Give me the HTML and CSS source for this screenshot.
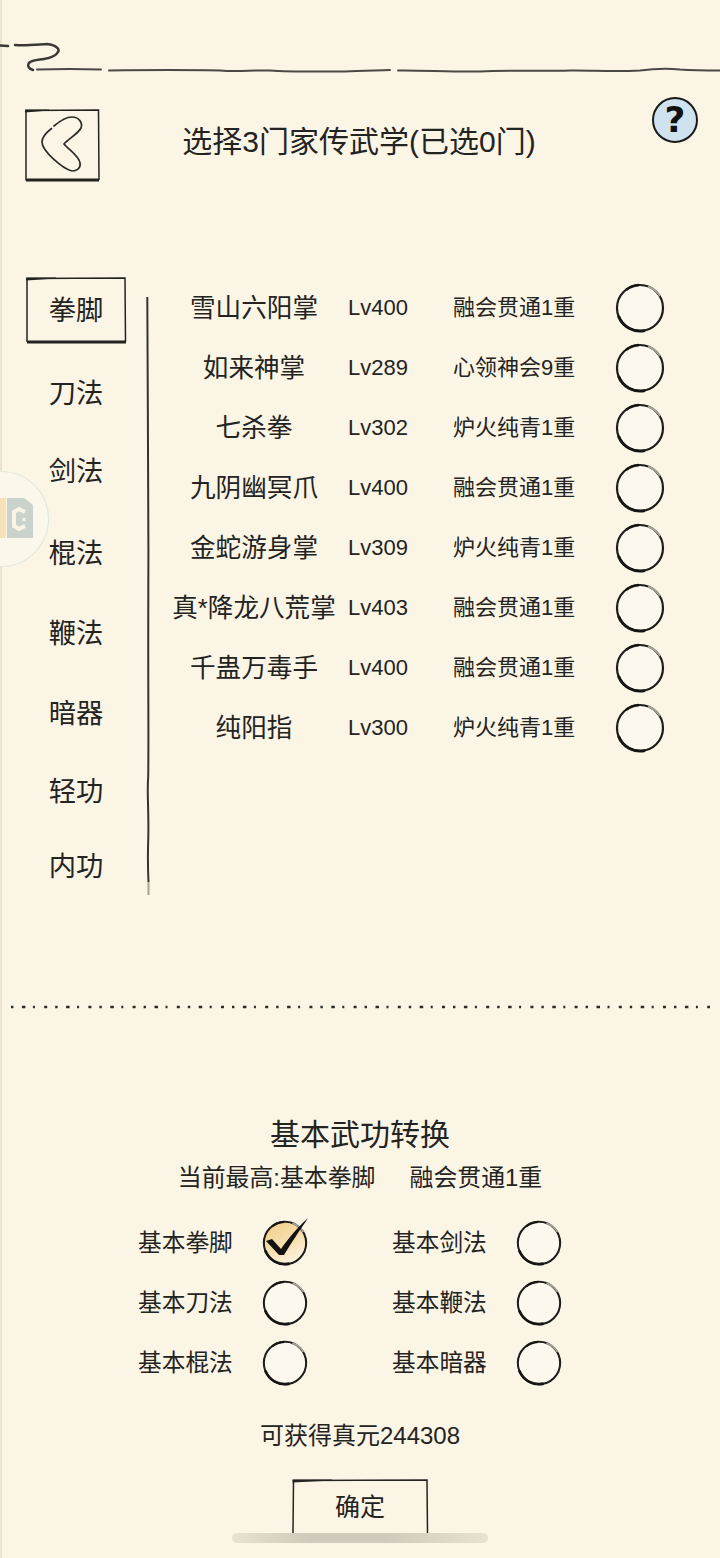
FILE: index.html
```html
<!DOCTYPE html>
<html lang="zh-CN">
<head>
<meta charset="utf-8">
<title>选择家传武学</title>
<link rel="stylesheet" href="styles.css">
</head>
<body>
<svg class="defs" aria-hidden="true">
  <defs>
    <symbol id="ring-ink" viewBox="0 0 50 50">
      <circle cx="25" cy="25" r="23" fill="none" stroke="#1d1d1b" stroke-width="2.200"/>
      <path d="M3.500 33A23 23 0 0 0 30 47.500" fill="none" stroke="#151513" stroke-width="3"/>
      <path d="M11 7A23 23 0 0 1 24 2" fill="none" stroke="#151513" stroke-width="2.600"/>
      <path d="M33 3.500A23 23 0 0 1 45 13" fill="none" stroke="#a5a296" stroke-width="2"/>
    </symbol>
    <symbol id="ring" viewBox="0 0 50 50">
      <circle cx="25" cy="25" r="23" fill="#fdf8ee"/>
      <use href="#ring-ink" width="50" height="50"/>
    </symbol>
    <linearGradient id="gold" x1="0.2" y1="0" x2="0.7" y2="1">
      <stop offset="0" stop-color="#f3cf8a"/>
      <stop offset="0.55" stop-color="#f7e0b0"/>
      <stop offset="1" stop-color="#fcf4e2"/>
    </linearGradient>
  </defs>
</svg>

<main class="page">
  <svg class="top-rule" viewBox="0 0 720 36" aria-hidden="true">
    <path class="top-curl" d="M0 5.500L8 6M15 5C25 6 38 4.500 47 4C56 5 60 9 58 12C56 16 50 18 44 19C38 20 32 20 29 23C27 26 29 29 33 30" />
    <path d="M37 29.500C58 29 82 29 101 29.500M109 30.500C150 30 190 30 220 30.500C240 32 250 30 270 30.500C290 32 320 31.500 345 31.500C360 30.500 378 30.500 390 30M398 30.500C420 30 450 32 480 31.500C510 30 540 31.500 570 30.500C590 30 610 32 640 30.500C655 28.500 670 28.500 680 29.500C695 30.500 710 30.500 720 30.500"/>
  </svg>

  <header class="header">
    <button class="back" aria-label="返回">
      <svg class="frame" viewBox="0 0 74 72" preserveAspectRatio="none" aria-hidden="true">
        <path class="ink" d="M1 1.500L73.500 1L74 71" />
        <path class="ink" d="M1 1V71.500" />
        <path class="ink-wedge" d="M0 0.500H24V1.500L0 3.500Z" />
        <path class="ink-heavy" d="M1 71H74" />
      </svg>
      <svg class="back-glyph" viewBox="0 0 74 72" aria-hidden="true">
        <path d="M29 17C36 11 42 8 47 8C54 8 58 14 56 19C53 25 43 30 39 35C44 41 54 47 55 54C56 59 52 62 47 62C38 60 17 42 17 33C17 28 22 23 26.500 19.500"/>
      </svg>
    </button>
    <h1 class="title">选择3门家传武学(已选0门)</h1>
    <span class="help">?</span>
  </header>

  <section class="arts">
    <nav class="tabs">
      <a class="tab tab-active">拳脚
        <svg class="frame" viewBox="0 0 100 66" preserveAspectRatio="none" aria-hidden="true">
          <path class="ink" d="M1 1.500L99 1L99.500 65M1 1V65" />
          <path class="ink-wedge" d="M0 0.500H30V1.500L0 3.500Z" />
          <path class="ink-heavy" d="M1 65H100" />
        </svg>
      </a>
      <a class="tab">刀法</a>
      <a class="tab">剑法</a>
      <a class="tab">棍法</a>
      <a class="tab">鞭法</a>
      <a class="tab">暗器</a>
      <a class="tab">轻功</a>
      <a class="tab">内功</a>
    </nav>
    <svg class="divider" viewBox="0 0 6 598" preserveAspectRatio="none" aria-hidden="true">
      <path d="M2.300 0C2.500 100 3.800 200 3.300 300C3 400 3.800 440 3.200 480C1.800 495 3.900 510 3.300 540C2.600 560 3 575 3.500 585" />
      <path class="divider-tail" d="M3.500 585V598" />
    </svg>
    <ul class="list">
      <li class="art"><span class="art-name">雪山六阳掌</span><span class="art-level">Lv400</span><span class="art-rank">融会贯通1重</span><svg class="ring"><use href="#ring"/></svg></li>
      <li class="art"><span class="art-name">如来神掌</span><span class="art-level">Lv289</span><span class="art-rank">心领神会9重</span><svg class="ring"><use href="#ring"/></svg></li>
      <li class="art"><span class="art-name">七杀拳</span><span class="art-level">Lv302</span><span class="art-rank">炉火纯青1重</span><svg class="ring"><use href="#ring"/></svg></li>
      <li class="art"><span class="art-name">九阴幽冥爪</span><span class="art-level">Lv400</span><span class="art-rank">融会贯通1重</span><svg class="ring"><use href="#ring"/></svg></li>
      <li class="art"><span class="art-name">金蛇游身掌</span><span class="art-level">Lv309</span><span class="art-rank">炉火纯青1重</span><svg class="ring"><use href="#ring"/></svg></li>
      <li class="art"><span class="art-name">真*降龙八荒掌</span><span class="art-level">Lv403</span><span class="art-rank">融会贯通1重</span><svg class="ring"><use href="#ring"/></svg></li>
      <li class="art"><span class="art-name">千蛊万毒手</span><span class="art-level">Lv400</span><span class="art-rank">融会贯通1重</span><svg class="ring"><use href="#ring"/></svg></li>
      <li class="art"><span class="art-name">纯阳指</span><span class="art-level">Lv300</span><span class="art-rank">炉火纯青1重</span><svg class="ring"><use href="#ring"/></svg></li>
    </ul>
  </section>

  <svg class="dots" viewBox="0 0 720 10" aria-hidden="true">
    <line x1="11" y1="5" x2="710" y2="5"/>
  </svg>

  <section class="convert">
    <h2 class="convert-title">基本武功转换</h2>
    <p class="convert-sub"><span>当前最高:基本拳脚</span><span>融会贯通1重</span></p>
    <div class="basics">
      <div class="basic"><span class="basic-name">基本拳脚</span>
        <svg class="tick" viewBox="0 0 46 46" aria-hidden="true">
          <circle cx="23" cy="23" r="21" fill="url(#gold)"/>
          <use href="#ring-ink" width="46" height="46"/>
          <path class="tick-mark" d="M4 21L10 19L19 29C25 20 34 9 46 -2C38 10 28 25 22 35L17 35Z"/>
        </svg>
      </div>
      <div class="basic"><span class="basic-name">基本剑法</span><svg class="ring ring-small"><use href="#ring"/></svg></div>
      <div class="basic"><span class="basic-name">基本刀法</span><svg class="ring ring-small"><use href="#ring"/></svg></div>
      <div class="basic"><span class="basic-name">基本鞭法</span><svg class="ring ring-small"><use href="#ring"/></svg></div>
      <div class="basic"><span class="basic-name">基本棍法</span><svg class="ring ring-small"><use href="#ring"/></svg></div>
      <div class="basic"><span class="basic-name">基本暗器</span><svg class="ring ring-small"><use href="#ring"/></svg></div>
    </div>
    <p class="gain">可获得真元244308</p>
    <button class="confirm">确定
      <svg class="frame" viewBox="0 0 136 54" preserveAspectRatio="none" aria-hidden="true">
        <path class="ink" d="M1 54L1.500 1.500L135 1L135.500 54" />
        <path class="ink-wedge" d="M0.500 0.500H40V1.500L0.500 3.500Z" />
      </svg>
    </button>
  </section>

  <!-- floating helper bubble docked to the screen edge -->
  <svg class="bubble" viewBox="0 0 50 100" aria-hidden="true">
    <circle cx="1" cy="50" r="47.500" fill="#fbf7ea" stroke="#e2e8dc" stroke-width="1.200"/>
    <path d="M7 29H24L33 36V69H7Z" fill="#c9d3cb"/>
    <path d="M0 29H6V69H0Z" fill="#f5e2b8"/>
    <path d="M25 43L19 40L14 43V57L19 60L25 57" fill="none" stroke="#f8f5e8" stroke-width="4"/>
    <path d="M24 49V52" fill="none" stroke="#f8f5e8" stroke-width="3"/>
  </svg>

  <div class="home-bar"></div>
</main>
</body>
</html>
```

FILE: styles.css
```css
* {
  box-sizing: border-box;
}

html,
body {
  margin: 0;
  padding: 0;
  background: #fbf5e6;
}

.defs {
  position: absolute;
  width: 0;
  height: 0;
}

.page {
  position: relative;
  width: 720px;
  height: 1558px;
  overflow: hidden;
  padding-top: 40px;
  background: #fbf5e6;
  color: #232321;
  font-family: "Liberation Sans", "Noto Sans CJK SC", sans-serif;
  box-shadow: inset 2px 0 0 #ebe3d0;
}

/* hand-inked strokes */
.top-rule {
  display: block;
  width: 720px;
  height: 36px;
  fill: none;
  stroke: #4a4945;
  stroke-width: 2;
  stroke-linecap: round;
}

.top-curl {
  stroke: #3a3936;
  stroke-width: 2.500;
}

.frame {
  position: absolute;
  inset: 0;
  width: 100%;
  height: 100%;
  overflow: visible;
  pointer-events: none;
}

.ink,
.ink-heavy {
  fill: none;
  stroke: #232321;
  vector-effect: non-scaling-stroke;
}

.ink {
  stroke-width: 1.500;
}

.ink-heavy {
  stroke-width: 3;
}

.ink-wedge {
  fill: #232321;
}

/* header */
.header {
  display: grid;
  grid-template-columns: 1fr auto 1fr;
  height: 74px;
  margin-top: 32px;
  padding: 0 22px 0 20px;
}

.back {
  position: relative;
  width: 74px;
  height: 72px;
  margin: 1px 0 0 5px;
  padding: 0;
  border: 0;
  background: none;
}

.back-glyph {
  position: absolute;
  inset: 0;
  width: 74px;
  height: 72px;
  fill: none;
  stroke: #2b2b29;
  stroke-width: 1.700;
  stroke-linecap: round;
}

.title {
  margin: 14px 0 0;
  font-size: 30px;
  font-weight: 400;
  line-height: 40px;
  white-space: nowrap;
}

.help {
  display: flex;
  align-items: center;
  justify-content: center;
  justify-self: end;
  width: 46px;
  height: 46px;
  margin-top: -11px;
  border: 2.500px solid #1a1a18;
  border-radius: 50%;
  background: #cfe2ef;
  color: #111;
  font-family: "DejaVu Sans", sans-serif;
  font-size: 36px;
  font-weight: 700;
  line-height: 1;
}

/* martial arts list */
.arts {
  display: flex;
  align-items: flex-start;
  height: 618px;
  margin-top: 95px;
  padding-left: 26px;
}

.tabs {
  display: flex;
  flex-direction: column;
  align-items: center;
  width: 100px;
}

.tab {
  position: relative;
  font-size: 27.300px;
  line-height: 24px;
}

.tab-active {
  display: flex;
  align-items: center;
  justify-content: center;
  width: 100px;
  height: 66px;
  padding-top: 2px;
}

.tab:nth-child(2) { margin-top: 39px; }
.tab:nth-child(3) { margin-top: 54px; }
.tab:nth-child(4) { margin-top: 58px; }
.tab:nth-child(5) { margin-top: 56px; }
.tab:nth-child(6) { margin-top: 56px; }
.tab:nth-child(7) { margin-top: 54px; }
.tab:nth-child(8) { margin-top: 51px; }

.divider {
  flex: none;
  width: 6px;
  height: 598px;
  margin: 20px 0 0 19px;
  fill: none;
  stroke: #33332f;
  stroke-width: 2;
}

.divider-tail {
  stroke: #a5a397;
}

.list {
  flex: none;
  margin: 1px 0 0 9px;
  padding: 0;
  list-style: none;
}

.art {
  display: grid;
  grid-template-columns: 188px 105px 162px 50px;
  align-items: center;
  height: 60px;
}

.art-name {
  padding-bottom: 6px;
  font-size: 25.600px;
  text-align: center;
  white-space: nowrap;
}

.art-level,
.art-rank {
  font-size: 22px;
  white-space: nowrap;
}

.art-rank {
  padding-bottom: 6px;
}

.ring {
  display: block;
  width: 50px;
  height: 50px;
}

.ring-small {
  width: 46px;
  height: 46px;
}

.dots {
  display: block;
  width: 720px;
  height: 10px;
  margin-top: 107px;
  fill: none;
  stroke: #2b2b28;
  stroke-width: 2.400;
  stroke-dasharray: 2.400 8.500 3.500 7.500 2 9.300 3 8;
}

/* basic skill conversion */
.convert {
  display: flex;
  flex-direction: column;
  align-items: center;
}

.convert-title {
  margin: 103px 0 0;
  font-size: 30px;
  font-weight: 400;
  line-height: 40px;
}

.convert-sub {
  display: flex;
  gap: 34px;
  margin: 8px 0 0;
  font-size: 23.900px;
  line-height: 30px;
}

.basics {
  display: grid;
  grid-template-columns: 254px 170px;
  align-self: flex-start;
  margin: 20px 0 0 138px;
}

.basic {
  display: flex;
  align-items: center;
  gap: 30px;
  height: 60px;
}

.basic-name {
  width: 94px;
  padding-bottom: 4px;
  font-size: 23.700px;
  white-space: nowrap;
}

.tick {
  display: block;
  flex: none;
  width: 46px;
  height: 46px;
  overflow: visible;
}

.tick-mark {
  fill: #121210;
}

.gain {
  margin: 28px 0 0;
  font-size: 24px;
  line-height: 30px;
}

.confirm {
  position: relative;
  z-index: 1;
  width: 136px;
  height: 54px;
  margin-top: 28px;
  padding: 0 0 2px;
  border: 0;
  background: #fbf5e6;
  color: #232321;
  font-family: inherit;
  font-size: 25px;
}

/* overlays */
.bubble {
  position: absolute;
  top: 469px;
  left: 0;
  width: 50px;
  height: 100px;
}

.home-bar {
  position: absolute;
  top: 1533px;
  left: 232px;
  width: 256px;
  height: 10px;
  border-radius: 5px;
  background: linear-gradient(90deg, #e8e2d2, #cfcabb 30%, #cfcabb 60%, #e8e2d2);
}
```
